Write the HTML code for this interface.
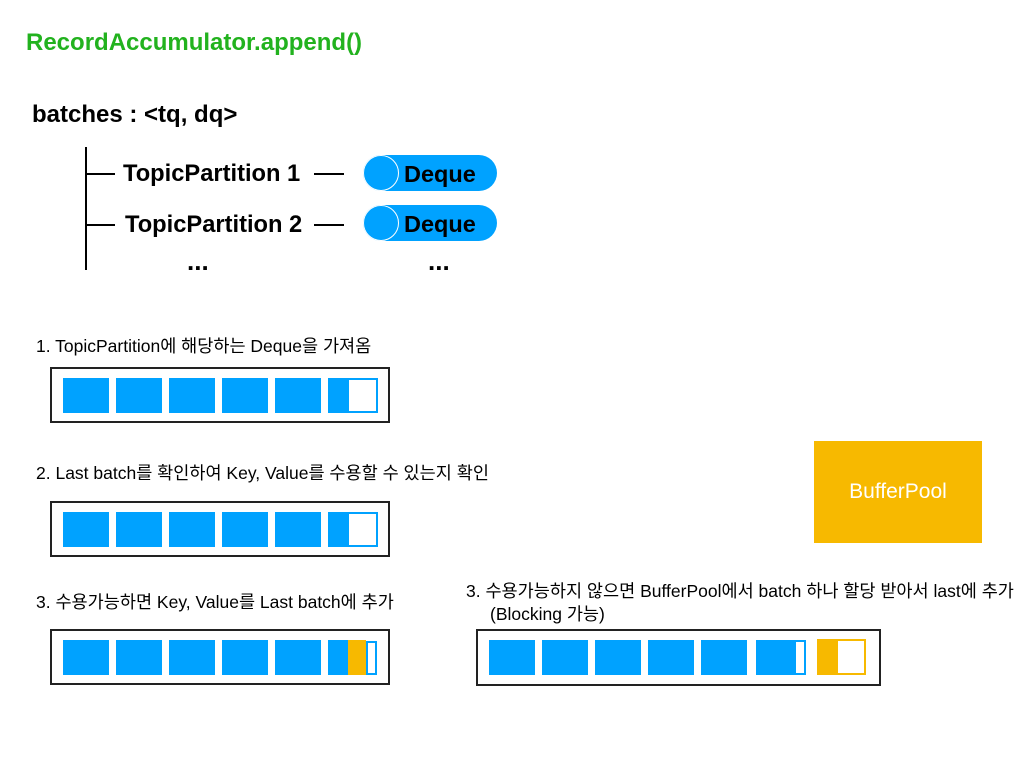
<!DOCTYPE html><html><head><style>
body{margin:0;width:1020px;height:758px;background:#fff;position:relative;font-family:"Liberation Sans","Noto Sans CJK KR",sans-serif;overflow:hidden}
.a{position:absolute}
.t{position:absolute;font-size:17.5px;color:#000;white-space:nowrap}
.b{position:absolute;font-weight:bold;color:#000;white-space:nowrap}
.box{position:absolute;border:2px solid #222;box-sizing:border-box}
.bl{position:absolute;background:#00a2ff;width:46px;height:35px}
.dq{position:absolute;width:134px;height:36px;background:#00a2ff;border-radius:18px}
.dq i{position:absolute;left:0;top:0;width:34px;height:34px;border-radius:50%;border:1px solid #fff;background:#00a2ff}
.dq span{position:absolute;left:41px;top:6px;font-weight:bold;font-size:23.5px}
</style></head><body>
<div class="b" style="left:26px;top:29px;font-size:24px;color:#22b21e">RecordAccumulator.append()</div>
<div class="b" style="left:32px;top:101px;font-size:24px">batches : &lt;tq, dq&gt;</div>
<div class="a" style="left:85px;top:147px;width:2px;height:123px;background:#000"></div>
<div class="a" style="left:87px;top:173px;width:28px;height:2px;background:#000"></div>
<div class="a" style="left:87px;top:224px;width:28px;height:2px;background:#000"></div>
<div class="b" style="left:123px;top:161px;font-size:23.7px">TopicPartition 1</div>
<div class="b" style="left:125px;top:212px;font-size:23.7px">TopicPartition 2</div>
<div class="a" style="left:314px;top:173px;width:30px;height:2px;background:#000"></div>
<div class="a" style="left:314px;top:224px;width:30px;height:2px;background:#000"></div>
<div class="dq" style="left:363px;top:155px"><i></i><span>Deque</span></div>
<div class="dq" style="left:363px;top:205px"><i></i><span>Deque</span></div>
<div class="b" style="left:187px;top:246px;font-size:26px">...</div>
<div class="b" style="left:428px;top:246px;font-size:26px">...</div>

<div class="t" style="left:36px;top:333px">1. TopicPartition에 해당하는 Deque을 가져옴</div>
<div class="box" style="left:50px;top:367px;width:340px;height:56px"></div>
<div class="bl" style="left:63px;top:378px"></div><div class="bl" style="left:116px;top:378px"></div><div class="bl" style="left:169px;top:378px"></div><div class="bl" style="left:222px;top:378px"></div><div class="bl" style="left:275px;top:378px"></div>
<div class="bl" style="left:328px;top:378px;width:21px"></div><div class="a" style="left:349px;top:378px;width:29px;height:35px;box-sizing:border-box;border:2px solid #00a2ff;border-left:none"></div>

<div class="t" style="left:36px;top:460px">2. Last batch를 확인하여 Key, Value를 수용할 수 있는지 확인</div>
<div class="box" style="left:50px;top:501px;width:340px;height:56px"></div>
<div class="bl" style="left:63px;top:512px"></div><div class="bl" style="left:116px;top:512px"></div><div class="bl" style="left:169px;top:512px"></div><div class="bl" style="left:222px;top:512px"></div><div class="bl" style="left:275px;top:512px"></div>
<div class="bl" style="left:328px;top:512px;width:21px"></div><div class="a" style="left:349px;top:512px;width:29px;height:35px;box-sizing:border-box;border:2px solid #00a2ff;border-left:none"></div>

<div class="a" style="left:814px;top:441px;width:168px;height:102px;background:#f7b900"></div>
<div class="t" style="left:814px;top:480px;width:168px;text-align:center;color:#fff;font-size:21px">BufferPool</div>

<div class="t" style="left:36px;top:589px">3. 수용가능하면 Key, Value를 Last batch에 추가</div>
<div class="box" style="left:50px;top:629px;width:340px;height:56px"></div>
<div class="bl" style="left:63px;top:640px"></div><div class="bl" style="left:116px;top:640px"></div><div class="bl" style="left:169px;top:640px"></div><div class="bl" style="left:222px;top:640px"></div><div class="bl" style="left:275px;top:640px"></div>
<div class="bl" style="left:328px;top:640px;width:20px"></div><div class="a" style="left:348px;top:640px;width:18px;height:35px;background:#f7b900"></div><div class="a" style="left:366px;top:641px;width:11px;height:34px;box-sizing:border-box;border:2px solid #00a2ff"></div>

<div class="t" style="left:466px;top:578px">3. 수용가능하지 않으면 BufferPool에서 batch 하나 할당 받아서 last에 추가</div>
<div class="t" style="left:490px;top:601px">(Blocking 가능)</div>
<div class="box" style="left:476px;top:629px;width:405px;height:57px"></div>
<div class="bl" style="left:489px;top:640px"></div><div class="bl" style="left:542px;top:640px"></div><div class="bl" style="left:595px;top:640px"></div><div class="bl" style="left:648px;top:640px"></div><div class="bl" style="left:701px;top:640px"></div>
<div class="bl" style="left:756px;top:640px;width:50px"></div><div class="a" style="left:796px;top:642px;width:8px;height:31px;background:#fff"></div>
<div class="a" style="left:817px;top:639px;width:21px;height:36px;background:#f7b900"></div><div class="a" style="left:838px;top:639px;width:28px;height:36px;box-sizing:border-box;border:2px solid #f7b900;border-left:none"></div>
</body></html>
